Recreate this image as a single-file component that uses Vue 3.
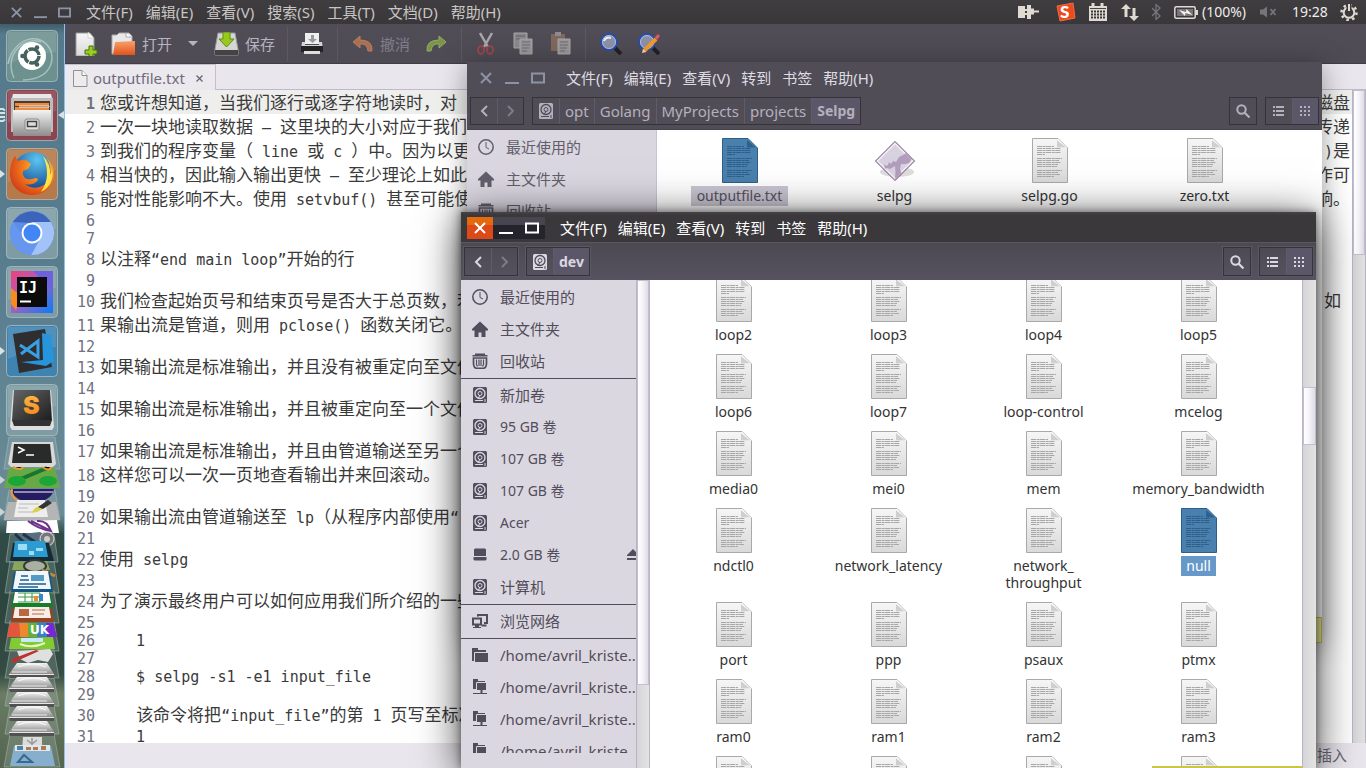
<script setup>
const editorMenus = ['文件(F)', '编辑(E)', '查看(V)', '搜索(S)', '工具(T)', '文档(D)', '帮助(H)']
const filesMenus = ['文件(F)', '编辑(E)', '查看(V)', '转到', '书签', '帮助(H)']

const source = [
  ['您或许想知道，当我们逐行或逐字符地读时，对', '磁盘'],
  ['一次一块地读取数据 – 这里块的大小对应于我们', '传递'],
  ['到我们的程序变量（ line 或 c ）中。因为以更', ')是'],
  ['相当快的，因此输入输出更快 – 至少理论上如此', '作可'],
  ['能对性能影响不大。使用 setvbuf() 甚至可能使', '响。'],
  [''],
  [''],
  ['以注释“end main loop”开始的行'],
  [''],
  ['我们检查起始页号和结束页号是否大于总页数，若', '如\u00a0'],
  ['果输出流是管道，则用 pclose() 函数关闭它。'],
  [''],
  ['如果输出流是标准输出，并且没有被重定向至文件'],
  [''],
  ['如果输出流是标准输出，并且被重定向至一个文件'],
  [''],
  ['如果输出流是标准输出，并且由管道输送至另一个'],
  ['这样您可以一次一页地查看输出并来回滚动。'],
  [''],
  ['如果输出流由管道输送至 lp（从程序内部使用“'],
  [''],
  ['使用 selpg'],
  [''],
  ['为了演示最终用户可以如何应用我们所介绍的一些'],
  [''],
  ['    1'],
  [''],
  ['    $ selpg -s1 -e1 input_file'],
  [''],
  ['    该命令将把“input_file”的第 1 页写至标准'],
  ['    1']
]
const wide = /[\u3000-\uffef]/
const runs = (s) =>
  (s.match(/[\u3000-\uffef]+|[^\u3000-\uffef]+/g) || []).map((t) => ({ t, cjk: wide.test(t) }))
const lines = source.map(([a, b = '']) => ({ tall: wide.test(a), left: runs(a), right: runs(b) }))

const crumbs = ['opt', 'Golang', 'MyProjects', 'projects', 'Selpg']
const backPlaces = [
  { icon: 'clock', name: '最近使用的', large: true },
  { icon: 'home', name: '主文件夹', large: true },
  { icon: 'trash', name: '回收站', large: true }
]
const frontPlaces = [
  backPlaces,
  [
    { icon: 'disk', name: '新加卷', large: true },
    { icon: 'disk', name: '95 GB 卷' },
    { icon: 'disk', name: '107 GB 卷' },
    { icon: 'disk', name: '107 GB 卷' },
    { icon: 'disk', name: 'Acer' },
    { icon: 'usb', name: '2.0 GB 卷', eject: true },
    { icon: 'disk', name: '计算机', large: true }
  ],
  [{ icon: 'net', name: '浏览网络', large: true }],
  [
    { icon: 'folder', name: '/home/avril_kriste..', large: true },
    { icon: 'remote', name: '/home/avril_kriste..', large: true },
    { icon: 'remote', name: '/home/avril_kriste..', large: true },
    { icon: 'remote', name: '/home/avril_kriste..', large: true }
  ]
]
const backFiles = ['outputfile.txt', 'selpg', 'selpg.go', 'zero.txt']
const frontFiles = [
  'loop2', 'loop3', 'loop4', 'loop5',
  'loop6', 'loop7', 'loop-control', 'mcelog',
  'media0', 'mei0', 'mem', 'memory_bandwidth',
  'ndctl0', 'network_latency', 'network_\nthroughput', 'null',
  'port', 'ppp', 'psaux', 'ptmx',
  'ram0', 'ram1', 'ram2', 'ram3',
  'ram4', 'ram5', 'ram6', 'ram7'
]
const drives = [227, 241, 256, 270, 285]
</script>

<template>
  <div class="desktop">
    <svg class="defs" aria-hidden="true">
      <defs>
        <linearGradient id="paper" x1="0" y1="0" x2="0" y2="1">
          <stop offset="0" stop-color="#f6f6f6" /><stop offset="1" stop-color="#d9d9d9" />
        </linearGradient>
        <linearGradient id="metal" x1="0" y1="0" x2="0" y2="1">
          <stop offset="0" stop-color="#f4f4f4" /><stop offset="1" stop-color="#8d8d8d" />
        </linearGradient>
        <linearGradient id="orange" x1="0" y1="0" x2="0" y2="1">
          <stop offset="0" stop-color="#f9a06a" /><stop offset="1" stop-color="#e2521d" />
        </linearGradient>
        <linearGradient id="dark" x1="0" y1="0" x2="1" y2="1">
          <stop offset="0" stop-color="#666" /><stop offset="1" stop-color="#1c1c1c" />
        </linearGradient>
        <linearGradient id="ide" x1="0" y1="0" x2="1" y2="1">
          <stop offset="0" stop-color="#f0407c" /><stop offset=".45" stop-color="#a860c0" /><stop offset="1" stop-color="#087cfa" />
        </linearGradient>
        <linearGradient id="key" x1="0" y1="0" x2="0" y2="1">
          <stop offset="0" stop-color="#ffc24a" /><stop offset="1" stop-color="#f57f17" />
        </linearGradient>
        <radialGradient id="globe" cx=".6" cy=".2" r=".8">
          <stop offset="0" stop-color="#5bc6f2" /><stop offset="1" stop-color="#123f86" />
        </radialGradient>
        <radialGradient id="fox" cx=".7" cy=".3" r=".8">
          <stop offset="0" stop-color="#ffd83a" /><stop offset=".5" stop-color="#f47c1c" /><stop offset="1" stop-color="#cf3a17" />
        </radialGradient>
      </defs>
      <symbol id="doc" viewBox="0 0 36 45">
        <path d="M.5.5H26L35.500 10V44.500H.5Z" fill="var(--page, url(#paper))" stroke="var(--rim, #a9a9a9)" />
        <path d="M25 1V10H35L26 1Z" fill="var(--fold, #fff)" /><path d="M25 2V9.500H34Z" fill="var(--shade, #cfcfcf)" />
        <path d="M5 8.500h17M5 10.500h24M5 12.500h24M5 14.500h24M5 16.500h8M5 20.500h25M5 22.500h22M5 24.500h24M5 26.500h21M5 28.500h20M5 32.500h25M5 34.500h21M5 36.500h23M5 38.500h17" stroke="var(--ink, #a7a7a7)" stroke-dasharray="5 .6 3 .5" />
      </symbol>
      <symbol id="clock" viewBox="0 0 16 16"><circle cx="8" cy="8" r="7.200" fill="none" stroke="currentColor" stroke-width="1.500" /><path d="M8 3v5.500l3 1.500" fill="none" stroke="currentColor" /></symbol>
      <symbol id="home" viewBox="0 0 16 16"><path d="M8 .5 0 8v1.500h2.500V16H6.500v-4.500h3V16h4V9.500H16V8Z" fill="currentColor" /></symbol>
      <symbol id="trash" viewBox="0 0 16 16"><path d="M3 .5h10v1.500h2.500v1.500H.5V2H3Z" fill="currentColor" /><path d="M1.500 5h13v5q0 5-3 5.300h-7q-3-.3-3-5.300Z" fill="none" stroke="currentColor" stroke-width="1.700" /><path d="M4.500 6.500v5l1 2M7 6.500V13M9 6.500V13M11.500 6.500v5l-1 2" stroke="currentColor" fill="none" stroke-width="1.200" /></symbol>
      <symbol id="disk" viewBox="0 0 14 16"><rect width="14" height="16" rx="1.500" fill="currentColor" /><circle cx="7" cy="6.500" r="5" fill="none" stroke="var(--hole, #dbd7e1)" stroke-width="1.300" /><circle cx="7" cy="6.500" r="2" fill="none" stroke="var(--hole, #dbd7e1)" /><path d="M7 8 5 12M2 13.500h8M12 12v3" stroke="var(--hole, #dbd7e1)" /></symbol>
      <symbol id="usb" viewBox="0 0 14 16"><path d="M1 2.500 2 1.500h10l1 1V9H1ZM.5 10h13v2.500l-1 1h-11l-1-1Z" fill="currentColor" /></symbol>
      <symbol id="net" viewBox="0 0 16 16"><path d="M6 3.500V2h9v8h-3M9.500 12.500h5" fill="none" stroke="currentColor" stroke-width="2" /><path d="M1 5.500h8v6H1Z" fill="none" stroke="currentColor" stroke-width="2" /><path d="M3 12h4v2h2v1H1v-1h2Z" fill="currentColor" /></symbol>
      <symbol id="folder" viewBox="0 0 16 16"><path d="M0 1h6v2h8v2H3.500L3 6H2v8H0ZM3 6h13v9H3Z" fill="currentColor" /><path d="M2.500 14V5.500H16" fill="none" stroke="#dbd7e1" /></symbol>
      <symbol id="remote" viewBox="0 0 16 16"><path d="M1 0h5v2h7v3H5v5H1ZM5 4h9v7H5ZM8.500 11h2v3H15v1H1v-1h7.500Z" fill="currentColor" /><path d="M4.500 10V3.500H14" fill="none" stroke="#dbd7e1" /></symbol>
      <symbol id="find" viewBox="0 0 14 14"><circle cx="5.500" cy="5.500" r="4.200" fill="none" stroke="currentColor" stroke-width="2" /><path d="m8.500 8.500 5 5" stroke="currentColor" stroke-width="2.200" /></symbol>
      <symbol id="list" viewBox="0 0 12 10"><path d="M0 1h2M3 1h8M0 5h2M3 5h8M0 9h2M3 9h8" stroke="currentColor" stroke-width="2" /></symbol>
      <symbol id="grid" viewBox="0 0 12 10"><path d="M0 1h12M0 5h12M0 9h12" stroke="currentColor" stroke-width="2" stroke-dasharray="2 2" /></symbol>
      <symbol id="prev" viewBox="0 0 8 12"><path d="M7 1 2 6l5 5" fill="none" stroke="currentColor" stroke-width="2" /></symbol>
      <symbol id="next" viewBox="0 0 8 12"><path d="m1 1 5 5-5 5" fill="none" stroke="currentColor" stroke-width="2" /></symbol>
      <symbol id="close" viewBox="0 0 14 14"><path d="m2 2 10 10M12 2 2 12" stroke="currentColor" stroke-width="2" /></symbol>
      <symbol id="min" viewBox="0 0 14 14"><path d="M0 12h14" stroke="currentColor" stroke-width="2" /></symbol>
      <symbol id="max" viewBox="0 0 14 14"><path d="M1 2.500h12v9H1Z" fill="none" stroke="currentColor" stroke-width="2" /></symbol>
      <symbol id="tile" viewBox="0 0 52 52"><rect x=".5" y=".5" width="51" height="51" rx="4" fill="var(--tile, #7f9ca5)" stroke="#b4c6cb" stroke-opacity=".7" /><path d="M2 2h48v20Q25 24 2 34Z" fill="#fff" opacity=".1" /></symbol>
    </svg>

    <header class="panel">
      <div class="wm dim">
        <button aria-label="关闭"><svg width="13" height="13"><use href="#close" /></svg></button>
        <button aria-label="最小化"><svg width="13" height="13"><use href="#min" /></svg></button>
        <button aria-label="最大化"><svg width="13" height="13"><use href="#max" /></svg></button>
      </div>
      <nav class="menus top">
        <button v-for="m in editorMenus" :key="m">{{ m }}</button>
      </nav>
      <div class="tray">
        <svg width="21" height="14" viewBox="0 0 21 14"><path d="M0 1h7v12H0ZM9 0h4v3.500h3v2h5v2h-5v2h-3V14H9v-4H7V8h2V6H7V4h2Z" fill="#dfdbd2" /></svg>
        <svg class="sogou" width="20" height="20" viewBox="0 0 20 20"><path d="m1 4 16-3 2 15-15 3Z" fill="#ee4a1d" stroke="#f36b3d" /><text x="4" y="16" font-size="17" font-weight="900" fill="#fff" font-family="Lato">S</text></svg>
        <svg class="cal" width="18" height="18" viewBox="0 0 18 18"><path d="M0 3h18v15H0Z" fill="#dfdbd2" /><path d="M1 5.500h16" stroke="#444" /><path d="M2 8.500h14M2 11.500h14M2 14.500h14" stroke="#3b393c" stroke-width="2" stroke-dasharray="2 1" /><path d="M4 0v4M13 0v4" stroke="#dfdbd2" stroke-width="3" /></svg>
        <svg class="net" width="18" height="17" viewBox="0 0 18 17"><path d="M5 0 0 5h3.500v8h3V5H10ZM13 17l5-5h-3.500V4h-3v8H8Z" fill="#dfdbd2" /></svg>
        <svg class="bt" width="9" height="16" viewBox="0 0 9 16"><path d="m0 4 8 8-4 3.500v-15L8 4l-8 8" fill="none" stroke="#77757a" stroke-width="1.300" /></svg>
        <svg class="bat" width="24" height="13" viewBox="0 0 24 13"><rect x=".8" y=".8" width="20.400" height="11.400" rx="1.500" fill="none" stroke="#dfdbd2" stroke-width="1.500" /><path d="M3 3h16v7H3Z" fill="#77757a" /><path d="m5 4 7 2 .5-3 6 6-7-2-.5 3Z" fill="#f2f0ec" /><path d="M23 4v5" stroke="#dfdbd2" stroke-width="2" /></svg>
        <span class="pct">(100%)</span>
        <svg class="mute" width="17" height="12" viewBox="0 0 17 12"><path d="M0 3.500h3l4-3v11l-4-3H0Z" fill="#77757a" /><path d="m10.500 3 5 6m0-6-5 6" stroke="#77757a" stroke-width="1.800" /></svg>
        <time>19:28</time>
        <svg class="gear" width="18" height="18" viewBox="0 0 18 18"><circle cx="9" cy="9.500" r="5.300" fill="none" stroke="#dfdbd2" stroke-width="2" /><circle cx="9" cy="9.500" r="7.500" fill="none" stroke="#dfdbd2" stroke-width="2.500" stroke-dasharray="2.500 3.390" /><path d="M9 0v9" stroke="#3b393c" stroke-width="5" /><path d="M9 1v7" stroke="#dfdbd2" stroke-width="2" /></svg>
      </div>
    </header>

    <div class="work">
      <aside class="launcher">
        <svg width="52" height="52" viewBox="0 0 52 52" class="t-dash"><use href="#tile" /><path d="M2 34C6 10 34-2 45 21M8 48C-3 24 19 6 35 12M17 50C49 50 52 22 38 12" fill="none" stroke="#c8dcdb" opacity=".6" stroke-width="1.500" /><circle cx="26" cy="26" r="14" fill="#fff" /><circle cx="26" cy="26" r="7" fill="none" stroke="#45625f" stroke-width="3.500" stroke-dasharray="13.600 1" /><circle cx="16.500" cy="26" r="2.300" fill="#45625f" /><circle cx="31" cy="17.500" r="2.300" fill="#45625f" /><circle cx="31" cy="34.500" r="2.300" fill="#45625f" /></svg>
        <div class="slot">
          <svg width="52" height="52" viewBox="0 0 52 52" class="t-files"><use href="#tile" /><path d="M7 5h38l2 8H5Z" fill="#e9e9e9" /><path d="M5 9h42v34H5Z" fill="#bdbdbd" /><path d="M8 12h36v10H8Z" fill="#4c3b30" /><path d="M9 14h34v3H9ZM9 18h34v4H9Z" fill="#ee8a3c" /><path d="M13 17h30v1H13" stroke="#fff" stroke-width=".8" /><path d="M7 21h38v26H7Z" fill="url(#metal)" /><rect x="19" y="30" width="14" height="11" rx="2" fill="#dedede" stroke="#888" /><path d="M21.500 32.500h9v5h-9Z" fill="#ddd" stroke="#444" stroke-width="1.500" /></svg>
          <svg class="marks" width="6" height="14" viewBox="0 0 6 14"><path d="M0 1h3l2 1.500M0 5h5M0 9h5M0 13h3l2-1.500" stroke="#d9e2e4" stroke-width="1.800" fill="none" /></svg>
          <svg class="focus" width="6" height="8" viewBox="0 0 6 8"><path d="M6 0v8L0 4Z" fill="#d9e2e4" /></svg>
        </div>
        <div class="slot">
          <svg width="52" height="52" viewBox="0 0 52 52" class="t-fox"><use href="#tile" /><circle cx="27" cy="24" r="20" fill="url(#globe)" /><path d="M4 26C4 17 6 12 9 8l3 5q5-2 8-1l5 4-3 5-5 2q-1 6 4 8 4 1 8-1 3 0 3 2-5 6-13 4 9 7 19 1 8-6 6-18-1-6-4-10 9 8 8 20C47 39 38 47 26 47S4 38 4 26Z" fill="url(#fox)" /><path d="M37 8q8 8 7 19 2-3 2-7 3 17-11 24 11-16 2-36Z" fill="#ffe14a" /></svg>
          <svg class="run" width="5" height="8" viewBox="0 0 5 8"><path d="M0 0v8l5-4Z" fill="#d9e2e4" /></svg>
        </div>
        <svg width="52" height="52" viewBox="0 0 52 52"><use href="#tile" /><circle cx="26" cy="26" r="22" fill="#5e8fe8" /><path d="M7 15a22 22 0 0 1 37.500 0L26 16Z" fill="#3c64bb" /><path d="M26 15h19a22 22 0 0 1-20 33l9-16Z" fill="#a2c2fa" /><path d="M7 15 18 31l15 2-8 15A22 22 0 0 1 7 15" fill="#6796ee" /><circle cx="26" cy="26" r="9.500" fill="#4285f4" stroke="#fff" stroke-width="2" /></svg>
        <svg width="52" height="52" viewBox="0 0 52 52"><use href="#tile" /><path d="M5 5h42v42H5Z" fill="url(#ide)" /><path d="M5 22l10 8-5 14-5-6Z" fill="#f68b1f" /><path d="M27 5h20v20Z" fill="#6d62dc" /><path d="M11 11h30v30H11Z" fill="#0b0b0b" /><text x="13" y="27" font-family="DejaVu Sans Mono" font-weight="bold" font-size="15" fill="#fff">IJ</text><path d="M14 35.500h11" stroke="#fff" stroke-width="2" /></svg>
        <div class="slot">
          <svg width="52" height="52" viewBox="0 0 52 52" class="t-code"><use href="#tile" /><path d="m7 9 32-5 7 38-33 6Z" fill="#2e2e30" /><path d="m36 8 9 2 3 26-8 5-25-4 22-2Z" fill="#2795dc" /><path d="m14 20 18 12V16L15 29" fill="none" stroke="#38a1e4" stroke-width="3" /></svg>
          <svg class="run" width="5" height="8" viewBox="0 0 5 8"><path d="M0 0v8l5-4Z" fill="#d9e2e4" /></svg>
        </div>
        <svg width="52" height="52" viewBox="0 0 52 52"><use href="#tile" /><path d="M7 6h38l3 37-2 3H6l-2-3Z" fill="#dedede" /><path d="m8 6 36 0 2 31H6Z" fill="url(#dark)" /><path d="M6 36h40l-2 6H8Z" fill="#333" /><text x="17" y="30" font-family="Inter, sans-serif" font-weight="900" font-size="25" fill="url(#key)">S</text></svg>
        <svg class="stack" width="65" height="332" viewBox="0 0 65 332">
          <g stroke="#aec0b9" stroke-opacity=".5" fill="#b5c6c2" fill-opacity=".22"><path d="M9 1h46l5 32H4ZM9 54h46l5 30H4ZM10 98h44l4 28H6ZM10 125h44l5 32H5ZM10 155h44l5 32H5ZM10 185h44l5 30H5ZM10 214h44l5 28H5ZM10 242h44l5 28H5ZM10 270h44l5 28H5ZM10 298h44l6 33H4Z" /></g>
          <path d="m12 6 41 0 3 22-3 3H11l-3-3Z" fill="#d8d8d6" /><path d="M14 8h36l2 19H12Z" fill="#292b2b" /><path d="m18 11 6 3-6 3M26 19h8" fill="none" stroke="#fff" stroke-width="1.500" />
          <path d="M9 32h46l5 20H4Z" fill="#69a847" /><path d="M16 45 47 32" stroke="#15772c" stroke-width="4" /><path d="M13 31q8 4 10 0M42 31q8 5 9 0" stroke="#ea9a33" stroke-width="2" /><ellipse cx="17" cy="45" rx="9" ry="5" fill="#1ba737" /><ellipse cx="48" cy="45" rx="9" ry="5" fill="#1ba737" />
          <path d="M10 53h44q-2 12-20 13T11 54" fill="#251b60" /><path d="M12 53q-2 9 9 13" fill="none" stroke="#ee963d" stroke-width="2" /><path d="M14 56h39" stroke="#fff" />
          <path d="M8 66h48l4 18H4Z" fill="#b5b5b5" /><path d="M17 64h28l3 17H14Z" fill="#eee" /><path d="M19 68h20M18 72h10M18 76h14" stroke="#bbb" /><path d="m31 77 4-5 5-2 3 3-6 3Z" fill="#d8cf54" /><path d="m38 71 10-7 4 3-9 6Z" fill="#333" />
          <path d="m7 85 50-1 2 13H6Z" fill="#fff" /><path d="m31 85 20 10q-4-11-14-10M28 85q10 8 23 10" fill="none" stroke="#70308d" stroke-width="2" />
          <path d="m12 99 28-3 14 9-10 8Z" fill="#596f7e" /><path d="m15 98 12 11M23 98l12 8" stroke="#1e354b" stroke-width="3" /><circle cx="47" cy="103" r="7" fill="#777" stroke="#ddd" /><circle cx="47" cy="103" r="3" fill="#ccc" />
          <path d="M13 107h36l5 18H10Z" fill="#142b36" /><path d="M15 105h30l3 16H13Z" fill="#2b9bd1" /><path d="M18 108h9v6h-9ZM29 115h5v4h-5ZM36 112h7v3h-7Z" fill="#9bddf5" />
          <path d="m14 126 33-1 3 9H12Z" fill="#8aa65c" /><ellipse cx="35" cy="130" rx="11" ry="6" fill="#a9b0a0" stroke="#303b3b" stroke-width="2" /><path d="m42 134 13 6" stroke="#c48a35" stroke-width="3" />
          <path d="M14 136h36l3 20H11Z" fill="#145782" /><path d="M16 135h32l3 18H13Z" fill="#f0f6fa" /><path d="M21 140h7M20 144h9M19 148h27M18 151h20" stroke="#1b608f" stroke-width="1.500" /><path d="M31 139h13v6H31Z" fill="#519bc4" />
          <path d="M13 157h38l2 14H11Z" fill="#187d29" /><path d="M15 156h34l2 11H13Z" fill="#fff" /><path d="M18 157h22v9H18M25 157v9M32 157v9M18 161h22" fill="none" stroke="#34983f" /><path d="M34 165v-5h4v5Z" fill="#ee8b2b" /><path d="M39 165v-7h4v7Z" fill="#3388c5" />
          <path d="M13 171h38l3 15H11Z" fill="#92451e" /><path d="M15 171h34l2 11H13Z" fill="#f6ede7" /><path d="M19 173h10v7H19Z" fill="#b96842" /><path d="M32 174h13M32 178h12" stroke="#b96842" />
          <path d="M10 187h9l1 14H7Z" fill="#e6543b" /><path d="M19 187h9v14h-8Z" fill="#ee872d" /><path d="M28 187h9v14h-9Z" fill="#63b235" /><path d="M37 187h9l1 14H37Z" fill="#387fd2" /><path d="M46 187h7l4 14H47Z" fill="#7726d8" /><text x="30" y="198" font-size="12" font-family="DejaVu Sans" font-weight="bold" fill="#fff">UK</text>
          <path d="m11 202 42-1 2 12H9Z" fill="#82ca31" /><path d="M21 202h22v4H21Z" fill="#c4e9fa" /><path d="M20 208q12 5 25-1" fill="none" stroke="#eaf4be" stroke-width="2" />
          <path d="m17 215 33-2 3 5-5 8-10-2-10 3-8-4Z" fill="#e0e0de" /><path d="m12 223 24-9 3 1-22 10-5 2Z" fill="#ba332f" />
          <g v-for="y in drives" :key="y" :transform="`translate(0 ${y})`"><path d="M17 0h30l7 11H9Z" fill="url(#metal)" /><path d="M18 4q15-6 28 0M12 9h35" fill="none" stroke="#fff" stroke-opacity=".8" /><path d="M9 11h45v4H10Z" fill="#515151" /><path d="M9 11.500h45" stroke="#e5e5e5" /></g>
          <path d="M23 301h19v14H22Z" fill="#dcdcdc" /><path d="M32 302v8m-5-6 5 4 5-4" fill="none" stroke="#999" stroke-width="1.500" />
          <path d="M14 310h37l4 20H10Z" fill="#85afcd" /><path d="M15 309h35v6H15Z" fill="#dfe9ed" /><path d="M17 310h6v4h-6Z" fill="#54809b" /><path d="M26 311h5v3h-5M33 311h5v3h-5M41 310h5v4h-5" fill="#b37850" /><path d="m18 326 6-7 8 7Z" fill="none" stroke="#386a91" stroke-width="2" />
          <path d="M0 40v8l5-4ZM0 72v8l5-4Z" fill="#c8d5d5" />
        </svg>
      </aside>

      <main class="editor">
        <div class="tools">
          <button aria-label="新建"><svg width="23" height="24" viewBox="0 0 23 24"><path d="M1 1h14l4 5v18H1Z" fill="url(#paper)" stroke="#999" /><path d="M13 0v6h6Z" fill="#fff" stroke="#bbb" stroke-width=".6" /><path d="M14 14h4v4h4v4h-4v3h-4v-3h-4v-4h4Z" fill="#9bcc1f" stroke="#43730a" /></svg></button>
          <button class="open"><svg width="25" height="24" viewBox="0 0 25 24"><path d="M1 3h5l2-2h10l3 3v18H1Z" fill="#e8e8e8" stroke="#aaa" /><path d="M15 1v4h5" fill="#fff" stroke="#aaa" /><path d="m4 10 20-1v14H2Z" fill="url(#orange)" /></svg><span>打开</span></button>
          <button class="caret" aria-label="最近文件"><svg width="10" height="6" viewBox="0 0 10 6"><path d="M0 0h10L5 5Z" fill="#b8b3c0" /></svg></button>
          <button class="save"><svg width="25" height="24" viewBox="0 0 25 24"><path d="M4 1h17l3 16v6H1v-6Z" fill="#d5d5d5" stroke="#999" /><path d="M1 18h23v5H1Z" fill="#444" /><path d="M9 0h7v7h4l-7.500 8L5 7h4Z" fill="#97c91b" stroke="#5f8c13" /></svg><span>保存</span></button>
          <i class="rule" /><button class="print" aria-label="打印"><svg width="22" height="22" viewBox="0 0 22 22"><path d="M4 0h14v11H4Z" fill="#eee" /><path d="M10 2h3v4h3l-4.500 4L7 6h3Z" fill="#999" /><path d="M1 9h3v3h14V9h3l1 8H0Z" fill="#d4d4d4" /><path d="M0 13h22v6H0Z" fill="#232323" /><path d="M3 18h16v3H3Z" fill="#ddd" /></svg></button><i class="rule" />
          <button class="undo"><svg width="22" height="18" viewBox="0 0 22 18"><path d="m8 1-7 6 7 6V9q7-1 8 7h4Q21 5 8 5Z" fill="#a96f50" stroke="#b47f61" /></svg><span>撤消</span></button>
          <button class="redo" aria-label="重做"><svg width="22" height="18" viewBox="0 0 22 18"><path d="m14 1 7 6-7 6V9Q7 8 6 16H2Q1 5 14 5Z" fill="#7c944a" stroke="#94ab5f" /></svg></button><i class="rule" />
          <button class="cut" aria-label="剪切"><svg width="18" height="23" viewBox="0 0 18 23"><path d="m3 1 8 14M15 1 7 15" stroke="#aaa6ab" stroke-width="2.500" /><ellipse cx="4" cy="18" rx="3" ry="4" fill="none" stroke="#99464c" stroke-width="2" /><ellipse cx="13" cy="18" rx="3" ry="4" fill="none" stroke="#99464c" stroke-width="2" /></svg></button>
          <button class="copy" aria-label="复制"><svg width="20" height="23" viewBox="0 0 20 23"><path d="M1 1h13v15H1Z" fill="#8b888d" stroke="#aaa6aa" /><path d="M3 4h9M3 7h9" stroke="#65616a" /><path d="M7 7h12v15H7Z" fill="#99969a" stroke="#aaa6aa" /><path d="M9 10h8M9 13h8M9 16h7M9 19h5" stroke="#6d6a70" /></svg></button>
          <button class="paste" aria-label="粘贴"><svg width="20" height="23" viewBox="0 0 20 23"><path d="M0 2h14v17H0Z" fill="#80695a" /><path d="M4 0h6v4H4Z" fill="#8e8b90" /><path d="M7 7h12v15H7Z" fill="#99969a" stroke="#aaa6aa" /><path d="M9 10h8M9 13h8M9 16h7M9 19h5" stroke="#6d6a70" /></svg></button><i class="rule" />
          <button class="seek" aria-label="查找"><svg width="22" height="22" viewBox="0 0 22 22"><path d="m14 14 7 7" stroke="#222" stroke-width="4" /><circle cx="9" cy="9" r="8" fill="#8b91a6" stroke="#284dac" stroke-width="2" /><circle cx="9" cy="9" r="6.500" fill="none" stroke="#adc0e8" /><path d="M4 8q2-5 7-3" stroke="#eee" fill="none" stroke-width="2" /></svg></button>
          <button class="swap" aria-label="替换"><svg width="22" height="22" viewBox="0 0 22 22"><path d="m14 14 7 7" stroke="#222" stroke-width="4" /><circle cx="9" cy="9" r="8" fill="#8b91a6" stroke="#284dac" stroke-width="2" /><circle cx="9" cy="9" r="6.500" fill="none" stroke="#adc0e8" /><path d="M6 18 18 6" stroke="#f39a2c" stroke-width="4" /><path d="m17 4 3-3 2 2-3 4Z" fill="#e8565d" /><path d="m4 20 1-4 3 3Z" fill="#f3dfb4" /></svg></button>
        </div>
        <div class="tabs">
          <div class="tab">
            <svg width="15" height="17" viewBox="0 0 15 17"><path d="M.5.5H9l5 5v11H.5Z" fill="#ececec" stroke="#919191" /><path d="M9 .5v5h5" fill="#fff" stroke="#919191" /></svg>
            <span>outputfile.txt</span>
            <button aria-label="关闭标签"><svg width="7" height="7" viewBox="0 0 7 7"><path d="m.5.5 6 6m0-6-6 6" stroke="#6a6573" stroke-width="1.300" /></svg></button>
          </div>
        </div>
        <div class="body">
          <div class="text">
            <div v-for="(l, i) in lines" :key="i" class="line" :class="{ tall: l.tall, current: i === 0 }">
              <span class="num">{{ i + 1 }}</span>
              <span class="code"><span v-for="(r, k) in l.left" :key="k" :class="{ cjk: r.cjk }">{{ r.t }}</span></span>
              <span class="code tail"><span v-for="(r, k) in l.right" :key="k" :class="{ cjk: r.cjk }">{{ r.t }}</span></span>
            </div>
          </div>
          <div class="bar"><div class="thumb quarter" /></div>
        </div>
        <footer class="status">插入</footer>
      </main>
    </div>

    <section class="window back">
      <div class="title">
        <div class="wm dim">
          <button aria-label="关闭"><svg width="14" height="14"><use href="#close" /></svg></button>
          <button aria-label="最小化"><svg width="14" height="14"><use href="#min" /></svg></button>
          <button aria-label="最大化"><svg width="14" height="14"><use href="#max" /></svg></button>
        </div>
        <nav class="menus"><button v-for="m in filesMenus" :key="m">{{ m }}</button></nav>
      </div>
      <div class="nav">
        <div class="group"><button aria-label="后退"><svg width="8" height="12"><use href="#prev" /></svg></button><button class="off" aria-label="前进"><svg width="8" height="12"><use href="#next" /></svg></button></div>
        <div class="group path"><button aria-label="文件系统"><svg width="14" height="16"><use href="#disk" /></svg></button><button v-for="c in crumbs" :key="c" class="crumb" :class="{ on: c === 'Selpg' }">{{ c }}</button></div>
        <div class="group find"><button aria-label="搜索"><svg width="14" height="14"><use href="#find" /></svg></button></div>
        <div class="group view"><button aria-label="列表"><svg width="12" height="10"><use href="#list" /></svg></button><button class="on" aria-label="图标"><svg width="12" height="10"><use href="#grid" /></svg></button></div>
      </div>
      <div class="split">
        <div class="side">
          <div class="places"><div><a v-for="p in backPlaces" :key="p.name" href="#" :class="{ large: p.large }"><svg width="16" height="16"><use :href="'#' + p.icon" /></svg><span>{{ p.name }}</span></a></div></div>
        </div>
        <ul class="files">
          <li v-for="f in backFiles" :key="f">
            <button :class="{ chosen: f === 'outputfile.txt' }">
              <svg v-if="f === 'selpg'" width="40" height="45" viewBox="0 0 40 45"><ellipse cx="22" cy="34" rx="17" ry="5" fill="#ddd" /><path d="M20 3.500 39.500 23 20 42.500.5 23Z" fill="#d8d2e0" stroke="#6b4675" /><path d="M20 5.500 37.500 23 20 40.500 2.500 23Z" fill="none" stroke="#f2eef6" stroke-width="1.500" /><path d="m9 26 2 2 2-1 1-3 2 2 2-3 3 1 3-5 4-2 3-2 6 6-3 4-4 1h-4l-1 5 2 6-7 4q1-7 0-13l-5 3-3-1-2 1Z" fill="#a58bb0" opacity=".75" /></svg>
              <svg v-else width="36" height="45"><use href="#doc" /></svg>
              <span>{{ f }}</span>
            </button>
          </li>
        </ul>
      </div>
      <div class="float" />
    </section>

    <section class="window front">
      <div class="title">
        <div class="wm">
          <button class="x" aria-label="关闭"><svg width="14" height="14"><use href="#close" /></svg></button>
          <button aria-label="最小化"><svg width="14" height="14"><use href="#min" /></svg></button>
          <button aria-label="最大化"><svg width="14" height="14"><use href="#max" /></svg></button>
        </div>
        <nav class="menus"><button v-for="m in filesMenus" :key="m">{{ m }}</button></nav>
      </div>
      <div class="nav">
        <div class="group"><button aria-label="后退"><svg width="8" height="12"><use href="#prev" /></svg></button><button class="off" aria-label="前进"><svg width="8" height="12"><use href="#next" /></svg></button></div>
        <div class="group path"><button aria-label="文件系统"><svg width="14" height="16"><use href="#disk" /></svg></button><button class="crumb on">dev</button></div>
        <div class="group find"><button aria-label="搜索"><svg width="14" height="14"><use href="#find" /></svg></button></div>
        <div class="group view"><button aria-label="列表"><svg width="12" height="10"><use href="#list" /></svg></button><button class="on" aria-label="图标"><svg width="12" height="10"><use href="#grid" /></svg></button></div>
      </div>
      <div class="split">
        <div class="side">
          <div class="places">
            <div v-for="(g, n) in frontPlaces" :key="n">
              <a v-for="(p, i) in g" :key="i" href="#" :class="{ large: p.large }"><svg width="16" height="16"><use :href="'#' + p.icon" /></svg><span>{{ p.name }}</span><svg v-if="p.eject" class="eject" width="12" height="12" viewBox="0 0 12 12"><path d="M6 0 0 6v1h12V6ZM0 9h12v2H0Z" fill="currentColor" /></svg></a>
            </div>
          </div>
          <div class="bar"><div class="thumb long" /></div>
        </div>
        <ul class="files">
          <li v-for="f in frontFiles" :key="f">
            <button :class="{ chosen: f === 'null' }"><svg width="36" height="45"><use href="#doc" /></svg><span>{{ f }}</span></button>
          </li>
        </ul>
        <div class="bar plain"><div class="thumb mid" /></div>
        <div class="float" />
      </div>
    </section>
  </div>
</template>

<style>
body { margin: 0; overflow: hidden; }
</style>

<style scoped>
* { box-sizing: border-box; }
button { font: inherit; color: inherit; background: none; border: 0; padding: 0; margin: 0; display: flex; align-items: center; white-space: nowrap; }
svg { display: block; flex: none; }
a { color: inherit; text-decoration: none; }
.defs { position: absolute; width: 0; height: 0; }
.desktop { position: relative; height: 100vh; overflow: hidden; display: flex; flex-direction: column; font: 14px/20px "Noto Sans", "Noto Sans CJK SC", sans-serif; color: #3c3b40; }

.panel { height: 24px; flex: none; display: flex; align-items: center; padding: 0 8px 0 10px; background: linear-gradient(#3f3d40, #39373a); color: #dfdbd2; }
.wm { display: flex; align-items: center; color: #fff; }
.dim { color: #8b93a6; }
.panel .wm { gap: 11px; width: 76px; }
.menus { display: flex; gap: 11px; font-size: 15px; }
.menus.top { gap: 13px; color: #c9c5c3; }
.tray { display: flex; align-items: center; margin-left: auto; color: #efede9; }
.sogou { margin-left: 17px; }
.cal { margin-left: 13px; }
.net { margin-left: 14px; }
.bt { margin-left: 13px; }
.bat { margin-left: 13px; }
.pct { margin-left: 4px; width: 46px; }
.mute { margin-left: 12px; }
.tray time { margin-left: 15px; width: 37px; }
.gear { margin-left: 11px; }

.work { flex: 1; min-height: 0; display: flex; }
.launcher { width: 65px; flex: none; display: flex; flex-direction: column; align-items: center; gap: 7px; padding-top: 6px; border-right: 1px solid #8fbef2; overflow: hidden; background: linear-gradient(#3f5c69 0, #557a8c 10px, #587d8f 250px, #6b8c97 490px, #304b46 510px, #2d453f 590px, #344c42 650px, #6b7c64 670px, #53644f 744px); }
.slot { position: relative; width: 64px; display: flex; justify-content: center; }
.marks, .run { position: absolute; left: 0; top: 19px; }
.run { top: 22px; }
.focus { position: absolute; right: 0; top: 22px; }
.launcher > svg:not(.stack), .slot { flex: none; }
.stack { margin-top: -7px; }
.t-dash { --tile: #6d918f; }
.t-files { --tile: #8d4350; }
.t-fox { --tile: #b5794a; }
.t-code { --tile: #3f83b1; }

.editor { flex: 1; min-width: 0; display: flex; flex-direction: column; background: #fff; }
.tools { height: 40px; flex: none; display: flex; align-items: center; padding-left: 10px; background: linear-gradient(#504d56, #4e4b54); border-bottom: 1px solid #403d46; color: #b8b3c0; font-size: 15px; }
.tools button { gap: 6px; }
.rule { width: 1px; height: 34px; background: #5c5963; }
.tools .open { margin-left: 13px; }
.tools .caret { margin-left: 16px; }
.tools .save { margin-left: 16px; }
.save + .rule { margin-left: 12px; }
.tools .print { margin: 0 14px 0 13px; }
.tools .undo { margin-left: 14px; color: #817d89; }
.tools .redo { margin: 0 14px 0 15px; }
.tools .cut { margin-left: 15px; }
.tools .copy { margin-left: 18px; }
.tools .paste { margin: 0 14px 0 18px; }
.tools .seek { margin-left: 14px; }
.tools .swap { margin-left: 16px; }
.tabs { height: 26px; flex: none; display: flex; background: #e9e6ed; box-shadow: inset 0 -1px #bfb9ca; }
.tab { display: flex; align-items: center; gap: 5px; padding: 1px 12px 0 8px; width: 151px; background: #ebe8ee; border: 1px solid #c3bdcd; border-width: 1px 1px 0 0; color: #6f6b7b; font-size: 15px; }
.tab button { margin-left: auto; }
.body { flex: 1; min-height: 0; display: flex; }
.text { flex: 1; min-width: 0; overflow: hidden; }
.line { display: flex; align-items: baseline; height: 18px; line-height: 22px; font-size: 15px; font-family: "DejaVu Sans Mono", monospace; color: #3a3a3a; }
.line.tall { height: 24px; line-height: 28px; }
.current { background: #eeeeec; }
.num { width: 30px; text-align: right; color: #6f7180; flex: none; }
.current .num { font-weight: bold; }
.code { margin-left: 5px; white-space: pre; }
.code .cjk { font: 17px/1 "Noto Sans CJK SC", sans-serif; }
.tail { margin-left: auto; margin-right: 2px; }
.bar { width: 14px; flex: none; background: linear-gradient(90deg, #d5d5d8, #e3e3e3); border: 1px solid #b9b3c8; border-width: 0 1px 0 1px; }
.thumb { background: linear-gradient(90deg, #fff, #f4f2f7 50%, #dedbe5); border: 1px solid #c4bfd0; }
.quarter { height: 165px; }
.long { height: 405px; }
.status { height: 25px; flex: none; background: #e9e6ed; color: #6a6673; font-size: 15px; line-height: 25px; text-align: right; padding-right: 19px; }

.window { position: absolute; display: flex; flex-direction: column; background: #fff; }
.back { left: 467px; right: 44px; top: 62px; bottom: 125px; box-shadow: 0 4px 26px rgba(0, 0, 0, .38); }
.front { left: 461px; right: 50px; top: 212px; bottom: 0; box-shadow: 0 6px 40px rgba(0, 0, 0, .75), 0 0 8px rgba(0, 0, 0, .45); }
.title { display: flex; align-items: center; flex: none; }
.back .title { height: 32px; background: #504d56; color: #dedbe2; }
.front .title { height: 31px; padding-top: 1px; background: linear-gradient(#464448, #3a383b 3px); border-bottom: 1px solid #5a5761; color: #fff; }
.back .wm { gap: 12px; padding-left: 12px; width: 99px; }
.front .wm { margin: 0 15px 0 6px; background: linear-gradient(#47454f 0 8px, #25232b 8px); }
.front .wm button { width: 26px; height: 22px; justify-content: center; }
.front .wm .x { background: linear-gradient(#e5690f 0 8px, #de4918 8px); }
.nav { display: flex; align-items: center; flex: none; height: 37px; padding: 0 3px; background: linear-gradient(#4c4953, #56525f); color: #dcd8e2; --hole: #4f4c56; }
.back .nav { height: 36px; padding-bottom: 2px; background: #504d56; color: #b5b0bd; border-bottom: 1px solid #46434b; }
.group { display: flex; height: 29px; border: 1px solid #35333a; box-shadow: 0 0 0 1px #5b5864; }
.back .group { box-shadow: none; height: 28px; }
.group button { width: 26px; justify-content: center; }
.group button + button { border-left: 1px solid #605b6b; }
.group button.on { background: #5c5768; }
.group .off { color: #7f7b89; }
.group button.crumb { width: auto; padding: 0 5px; font-size: 15px; }
.group button.crumb.on { font-weight: bold; font-size: 14px; }
.path { margin-left: 8px; }
.find { margin-left: auto; }
.view { margin-left: 8px; }
.split { flex: 1; min-height: 0; display: flex; position: relative; }
.side { display: flex; flex: none; background: #dbd7e1; color: #514d5a; }
.back .side { width: 190px; border-right: 1px solid #c9c4d2; color: #625e6b; }
.places { width: 175px; overflow: hidden; padding-top: 1px; margin-bottom: 15px; }
.places > div + div { border-top: 1px solid #514d5a; margin-top: 1px; }
.places a { display: flex; align-items: center; gap: 12px; height: 32px; padding-left: 11px; white-space: nowrap; }
.places a.large { font-size: 15px; }
.eject { margin-left: auto; margin-right: -3px; }
.files { flex: 1; min-width: 0; overflow: hidden; list-style: none; margin: 0; display: grid; grid-template-columns: repeat(auto-fill, 155px); align-content: start; row-gap: 9px; padding: 8px 0 0 5px; }
.front .files { padding: 0 0 0 6px; margin-top: -3px; clip-path: inset(3px 0 0); }
.files button { width: 100%; flex-direction: column; gap: 3px; }
.files span { padding: 1px 5px 2px; line-height: 17px; white-space: pre-line; text-align: center; color: #333; }
.chosen { --page: #4a80ae; --rim: #2f5f88; --fold: #4a80ae; --shade: #2d618e; --ink: #2f5f88; }
.back .files .chosen span { background: #c9c5d2; color: #55515e; padding: 1px 6px 2px; }
.front .files .chosen span { background: #6699c9; color: #fff; }
.plain { padding-top: 107px; border-right-width: 0; }
.mid { height: 58px; }
.float { position: absolute; background: #f1efa2; border: 1px solid #c9c646; }
.back .float { right: 0; bottom: 0; width: 160px; height: 26px; }
.front .float { right: 14px; bottom: 0; width: 150px; height: 1px; }
</style>
